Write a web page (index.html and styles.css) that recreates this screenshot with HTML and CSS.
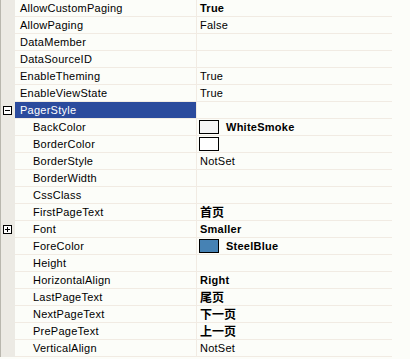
FILE: index.html
```html
<!DOCTYPE html>
<html lang="en">
<head>
    <meta charset="UTF-8">
    <title>Properties</title>
    <link rel="stylesheet" href="styles.css">
</head>
<body>
    <div class="grid">
        <div class="row"><span class="gutter"></span><span class="name">AllowCustomPaging</span><span class="value bold">True</span></div>
        <div class="row"><span class="gutter"></span><span class="name">AllowPaging</span><span class="value">False</span></div>
        <div class="row"><span class="gutter"></span><span class="name">DataMember</span><span class="value"></span></div>
        <div class="row"><span class="gutter"></span><span class="name">DataSourceID</span><span class="value"></span></div>
        <div class="row"><span class="gutter"></span><span class="name">EnableTheming</span><span class="value">True</span></div>
        <div class="row"><span class="gutter"></span><span class="name">EnableViewState</span><span class="value">True</span></div>
        <div class="row selected">
            <span class="gutter">
                <svg class="toggle" width="9" height="9" viewBox="0 0 9 9"><rect x="0.5" y="0.5" width="8" height="8" fill="#fff" stroke="#000"/><path d="M2 4.5h5" stroke="#000"/></svg>
            </span>
            <span class="name">PagerStyle</span><span class="value"></span>
        </div>
        <div class="row"><span class="gutter"></span><span class="name sub">BackColor</span><span class="value bold"><i class="swatch smoke"></i>WhiteSmoke</span></div>
        <div class="row"><span class="gutter"></span><span class="name sub">BorderColor</span><span class="value"><i class="swatch"></i></span></div>
        <div class="row"><span class="gutter"></span><span class="name sub">BorderStyle</span><span class="value">NotSet</span></div>
        <div class="row"><span class="gutter"></span><span class="name sub">BorderWidth</span><span class="value"></span></div>
        <div class="row"><span class="gutter"></span><span class="name sub">CssClass</span><span class="value"></span></div>
        <div class="row"><span class="gutter"></span><span class="name sub">FirstPageText</span><span class="value bold cjk">首页</span></div>
        <div class="row">
            <span class="gutter">
                <svg class="toggle" width="9" height="9" viewBox="0 0 9 9"><rect x="0.5" y="0.5" width="8" height="8" fill="#fff" stroke="#000"/><path d="M2 4.5h5M4.5 2v5" stroke="#000"/></svg>
            </span>
            <span class="name sub">Font</span><span class="value bold">Smaller</span>
        </div>
        <div class="row"><span class="gutter"></span><span class="name sub">ForeColor</span><span class="value bold"><i class="swatch steel"></i>SteelBlue</span></div>
        <div class="row"><span class="gutter"></span><span class="name sub">Height</span><span class="value"></span></div>
        <div class="row"><span class="gutter"></span><span class="name sub">HorizontalAlign</span><span class="value bold">Right</span></div>
        <div class="row"><span class="gutter"></span><span class="name sub">LastPageText</span><span class="value bold cjk">尾页</span></div>
        <div class="row"><span class="gutter"></span><span class="name sub">NextPageText</span><span class="value bold cjk">下一页</span></div>
        <div class="row"><span class="gutter"></span><span class="name sub">PrePageText</span><span class="value bold cjk">上一页</span></div>
        <div class="row"><span class="gutter"></span><span class="name sub">VerticalAlign</span><span class="value">NotSet</span></div>
    </div>
</body>
</html>
```

FILE: styles.css
```css
:root {
    --bg: #fcfdf9;
    --line: #f1ebe3;
    --gutter: #eceae4;
    --select: #2b4b9d;
}

* {
    margin: 0;
    padding: 0;
    box-sizing: border-box;
}

body {
    background: var(--bg);
    color: #000;
    font-family: "Liberation Sans", Arial, "Noto Sans CJK SC", sans-serif;
    font-size: 11px;
    letter-spacing: 0.25px;
    height: 359px;
    overflow: hidden;
}

.grid {
    width: 392px;
    display: flex;
    flex-direction: column;
}

.row {
    display: grid;
    grid-template-columns: 15px 182px 1fr;
    height: 17px;
}

.gutter {
    background: var(--gutter);
    border-left: 1px solid #b9b7ae;
    display: flex;
    align-items: center;
    padding-left: 2px;
}

.toggle {
    display: block;
}

.name,
.value {
    border-bottom: 1px solid var(--line);
    line-height: 16px;
    white-space: nowrap;
    overflow: hidden;
}

.name {
    padding-left: 5px;
    border-right: 1px solid var(--line);
}

.name.sub {
    padding-left: 18px;
}

.value {
    padding-left: 3px;
    display: flex;
    align-items: center;
}

.bold {
    font-weight: bold;
}

.cjk {
    font-family: "Noto Sans CJK SC", sans-serif;
    font-size: 12px;
    letter-spacing: 0;
}

.selected .name {
    background: var(--select);
    color: #fff;
}

.swatch {
    display: inline-block;
    width: 20px;
    height: 14px;
    border: 1px solid #000;
    background: #fff;
    margin-left: -1px;
    margin-right: 7px;
}

.swatch.smoke {
    background: #f5f5f5;
}

.swatch.steel {
    background: #4682b4;
}
```
